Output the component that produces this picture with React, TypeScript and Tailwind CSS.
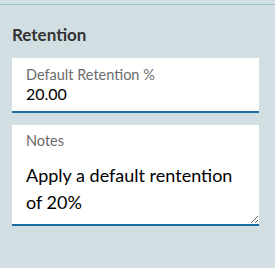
import React from 'react';

export default function App() {
  return (
    <div className="min-h-screen w-full bg-[#d1dee2] font-['Lato','Noto_Sans',sans-serif]">
      <div className="h-[4px]" />
      <div className="h-px bg-[#9fc4d0]" />

      <div className="pl-3 pr-4">
        {/* section heading */}
        <h3 className="pt-[19px] text-[17px] leading-[22px] font-bold text-[#333333]">Retention</h3>

        {/* default retention field */}
        <div className="mt-[12px] h-[55px] bg-white border-b-2 border-[#1d6ea3] px-[14px] pt-[8px]">
          <div className="text-[14.5px] leading-[18px] text-[#6b6b6b]">Default Retention %</div>
          <div className="text-[16px] leading-[20px] text-black">20.00</div>
        </div>

        {/* notes field */}
        <div className="mt-[12px] h-[101px] bg-white border-b-2 border-[#1d6ea3] pt-[7px] flex flex-col">
          <div className="px-[14px] text-[14.5px] leading-[18px] text-[#6b6b6b]">Notes</div>
          <textarea
            readOnly
            defaultValue="Apply a default rentention of 20%"
            className="flex-1 w-full resize-y bg-white pl-[14px] pr-[10px] pt-[12px] text-[18px] leading-[27px] text-black outline-none"
          />
        </div>
      </div>
    </div>
  );
}
